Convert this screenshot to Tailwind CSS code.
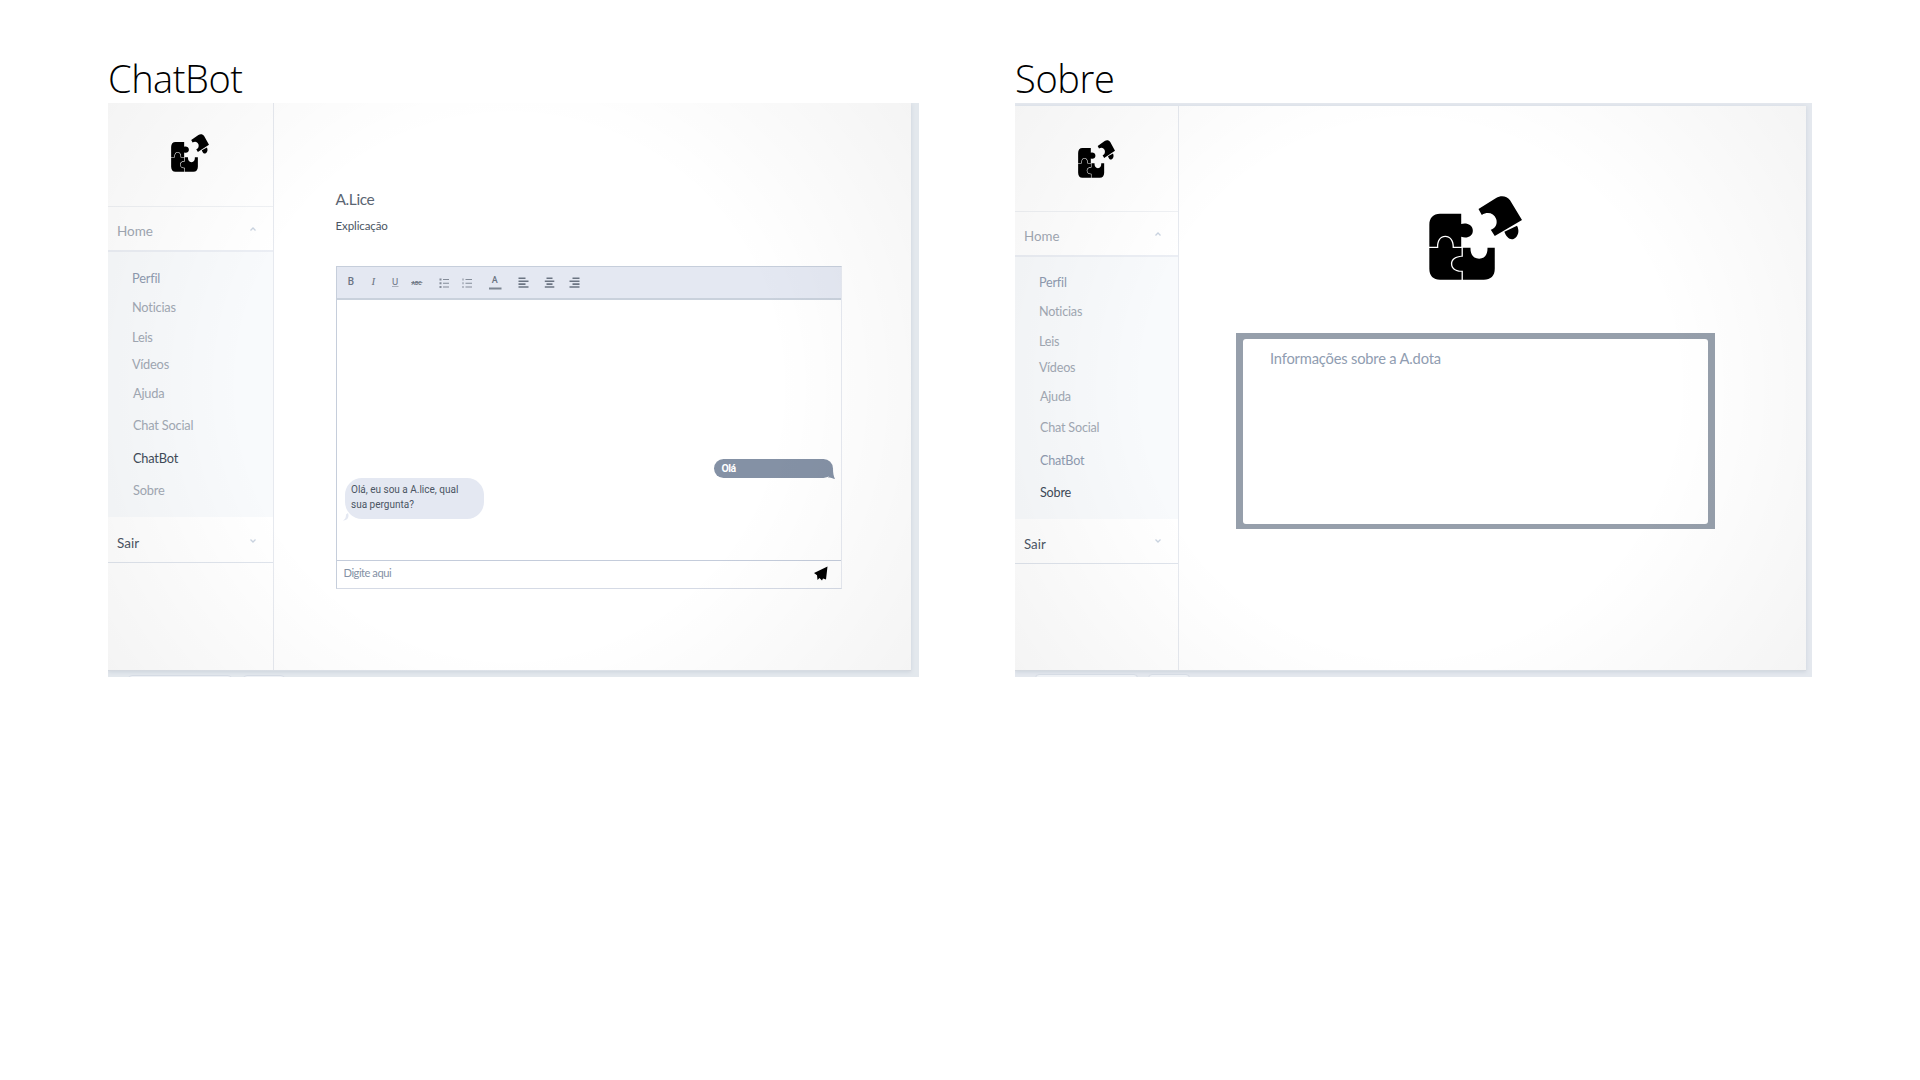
<!DOCTYPE html>
<html lang="pt">
<head>
<meta charset="utf-8">
<title>ChatBot / Sobre</title>
<script src="https://cdn.jsdelivr.net/npm/@tailwindcss/browser@4"></script>
</head>
<body class="bg-white w-[1920px] h-[1080px] overflow-hidden font-['Lato',sans-serif]">
<svg class="hidden">
  <symbol id="puzzle" viewBox="57 48 280 252" preserveAspectRatio="none">
    <path d="M57 150H255V250H57Z" fill="none"/>
    <path d="M90 101H154V132C168 127 189 133 189 152C189 170 170 176 154 170V200H132C132 179 121 167 106 167C91 167 81 180 81 200H58V134C58 114 70 101 90 101Z"/>
    <path d="M58 204H85C84 185 91 171 106 171C121 171 129 185 128 204H155V227C137 228 123 236 123 251C123 267 138 276 155 275V299H90C70 299 58 287 58 266Z"/>
    <path d="M159 203H182C181 222 190 236 208 236C226 236 234 221 233 203H255V266C255 287 243 299 222 299H159V272C141 273 127 266 127 251C127 237 142 230 159 230Z"/>
    <path d="M206 87L259 54C273 46 291 47 301 61L337 120L255 168L243 149C258 144 264 130 259 116C252 99 233 94 216 105Z"/>
    <path d="M284 155L322 137C330 151 326 169 313 176C301 182 289 170 284 155Z"/>
  </symbol>
</svg>
<main class="flex pl-[108px] pt-[54px] gap-[96px]">
  <!-- ChatBot -->
  <section class="w-[811px]">
    <h1 class="h-[49px] font-['Open_Sans'] font-light text-[38px] leading-[49px] tracking-[-0.45px] text-black">ChatBot</h1>
    <div class="relative h-[574px] bg-[#e3e8ed] pr-2 overflow-hidden">
      <div class="relative flex h-[568px] w-[803px] bg-white border-b border-[#dde2e9] shadow-[0_1px_4px_#ccd3dc]">
        <aside class="w-[166px] border-r border-[#e6e9ef]">
          <div class="h-[103px] pl-[63px] pt-[31px]"><svg class="w-[38px] h-[38px]"><use href="#puzzle"/></svg></div>
          <div class="h-[46px] border-t border-[#eff1f4] border-b-2 border-b-[#ebeef4] flex justify-between pl-[9px] pr-[16px] pt-[16px]">
            <span class="text-[13.5px] leading-4 text-[#a1a8b3]">Home</span>
            <svg class="w-2 h-2 mt-[2px]" viewBox="0 0 8 8" fill="none" stroke="#c9d3e0" stroke-width="1.3"><path d="M1.5 5.5L4 3L6.500 5.500"/></svg>
          </div>
          <nav class="h-[265px] bg-[#f8fafc] pl-6 text-[12.800px] tracking-[-0.2px] leading-4 text-[#a1a8b3]">
            <div class="h-[34px] flex items-end text-[#8f9bb0]">Perfil</div>
            <div class="h-[29px] flex items-end">Noticias</div>
            <div class="h-[30px] flex items-end">Leis</div>
            <div class="h-[27px] flex items-end">Vídeos</div>
            <div class="h-[29px] flex items-end pl-px">Ajuda</div>
            <div class="h-[32px] flex items-end pl-px">Chat Social</div>
            <div class="h-[33px] flex items-end pl-px text-[#404a58]">ChatBot</div>
            <div class="h-[32px] flex items-end pl-px">Sobre</div>
          </nav>
          <div class="h-[46px] border-b border-[#dfe4ec] flex justify-between pl-[9px] pr-[16px] pt-[18px]">
            <span class="text-[13.5px] leading-4 text-[#4c5664]">Sair</span>
            <svg class="w-2 h-2 mt-[2px]" viewBox="0 0 8 8" fill="none" stroke="#c9d3e0" stroke-width="1.3"><path d="M1.5 2.5L4 5L6.500 2.500"/></svg>
          </div>
        </aside>
        <div class="pl-[61.500px] pt-[86px]">
          <h2 class="text-[15.500px] tracking-[-0.4px] leading-5 text-[#5b6572]">A.Lice</h2>
          <p class="mt-[7px] text-[11.500px] tracking-[-0.1px] leading-5 text-[#4b5563] h-5">Explicação</p>
          <div class="mt-[30px] w-[506px] h-[323px] border border-[#c6cedb] border-r-[#e6e9f0] border-b-[#d5dae5] flex flex-col">
            <div class="h-[33px] bg-[#e4e8f2] border-b-2 border-[#c9d1dc]">
              <svg class="w-[260px] h-[31px]" viewBox="337 267 260 31" fill="#6b7482" stroke="none">
                <text x="347.800" y="285" font-family="Roboto" font-weight="500" font-size="10">B</text>
                <text x="371.500" y="285" font-family="Liberation Serif" font-style="italic" font-size="11">I</text>
                <text x="392" y="284.500" font-family="Roboto" font-size="9.500">U</text>
                <path d="M392 286H398.500V287H392Z" opacity=".5"/>
                <text x="411.500" y="284.500" font-family="Roboto" font-weight="700" font-size="5.200">ABC</text>
                <path d="M411 282.300H422.500V283H411Z"/>
                <path d="M439.500 278.500h2v2h-2zm0 3.700h2v2h-2zm0 3.700h2v2h-2zM443 279h6v1h-6zm0 3.700h6v1h-6zm0 3.700h6v1h-6z" opacity=".8"/>
                <path d="M462.500 278.500h1v2h-1zm0 3.700h1v2h-1zm0 3.700h1v2h-1zM465.500 279h6.500v1h-6.500zm0 3.700h6.500v1h-6.500zm0 3.700h6.500v1h-6.500z" opacity=".8"/>
                <text x="491.700" y="283" font-family="Roboto" font-weight="500" font-size="9">A</text>
                <path d="M489 287.500h12.500v2H489z" opacity=".85"/>
                <path d="M518.500 277.500h7v1.600h-7zm0 2.900h10v1.600h-10zm0 2.900h7v1.600h-7zm0 2.900h10v1.600h-10z"/>
                <path d="M546.500 277.500h6v1.600h-6zm-1.700 2.900h9.500v1.600h-9.500zm1.700 2.900h6v1.600h-6zm-1.700 2.900h9.500v1.600h-9.500z"/>
                <path d="M572.500 277.500h7v1.600h-7zm-3 2.900h10v1.600h-10zm3 2.900h7v1.600h-7zm-3 2.900h10v1.600h-10z"/>
              </svg>
            </div>
            <div class="flex-1 flex flex-col">
              <div class="relative self-end mr-2 mt-[159px] w-[119px] h-[19px] rounded-[10px] bg-[#8491a5] pl-[8px] text-white font-['Roboto'] font-bold text-[10.500px] leading-[20px] tracking-[-0.5px]">Olá
                <svg class="absolute right-[-2px] bottom-[-1px] w-[7px] h-[11px]" viewBox="0 0 7 11"><path d="M5 0C5 5 5.500 8 7 11C5 10.500 3 9 0 9.500Z" fill="#8491a5"/></svg>
              </div>
              <div class="relative ml-[8px] w-[139px] h-[41px] rounded-[17px] bg-[#e4e8f2] pl-[6.500px] pt-[4px] font-['Roboto'] text-[10px] leading-[15px] text-[#4b5563]">Olá, eu sou a A.lice, qual<br>sua pergunta?
                <svg class="absolute left-[-2px] bottom-[-2px] w-[6px] h-[8px]" viewBox="0 0 6 8"><path d="M5 0C6.500 4 4.500 8 0 7.500C2.500 6 3 4 3 1.500Z" fill="#e4e8f2"/></svg>
              </div>
            </div>
            <div class="h-[28px] border-t border-[#c4ccdb] flex items-start justify-between pl-[7px] pr-[13px]">
              <span class="text-[11.200px] tracking-[-0.5px] leading-[24px] text-[#8491a5]">Digite aqui</span>
              <svg class="mt-[5px] w-[14px] h-[15px]" viewBox="0 0 14 15"><path d="M13.500 .5L0 7L3 9.200L3.500 14L5.500 12L8 14.500L9 12.500L12 13.500Z"/></svg>
            </div>
          </div>
        </div>
      </div>
      <div class="absolute left-[20px] bottom-[-6px] w-[104px] h-2 rounded border border-[#d5dbe4] bg-[#eef1f5]"></div>
      <div class="absolute left-[135px] bottom-[-6px] w-[42px] h-2 rounded border border-[#d5dbe4] bg-[#eef1f5]"></div>
      <div class="absolute left-0 top-0 w-[803px] h-[568px] bg-[radial-gradient(circle,transparent_54%,rgba(0,0,0,0.043)_100%)]"></div>
    </div>
  </section>
  <!-- Sobre -->
  <section class="w-[797px]">
    <h1 class="h-[49px] font-['Open_Sans'] font-light text-[38px] leading-[49px] tracking-[-0.35px] text-black">Sobre</h1>
    <div class="relative h-[574px] bg-[#e4e8ee] pt-[3px] overflow-hidden">
      <div class="relative flex h-[565px] w-[791px] bg-white border-b border-[#dde2e9] shadow-[0_1px_4px_#ccd3dc]">
        <aside class="w-[164px] border-r border-[#e6e9ef]">
          <div class="h-[105px] pl-[63px] pt-[34px]"><svg class="w-[37px] h-[38px]"><use href="#puzzle"/></svg></div>
          <div class="h-[46px] border-t border-[#eff1f4] border-b-2 border-b-[#ebeef4] flex justify-between pl-[9px] pr-[16px] pt-[16px]">
            <span class="text-[13.300px] leading-4 text-[#a1a8b3]">Home</span>
            <svg class="w-2 h-2 mt-[2px]" viewBox="0 0 8 8" fill="none" stroke="#c9d3e0" stroke-width="1.3"><path d="M1.5 5.5L4 3L6.500 5.500"/></svg>
          </div>
          <nav class="h-[262px] bg-[#f8fafc] pl-6 text-[12.600px] tracking-[-0.2px] leading-4 text-[#a1a8b3]">
            <div class="h-[34px] flex items-end text-[#8f9bb0]">Perfil</div>
            <div class="h-[29px] flex items-end">Noticias</div>
            <div class="h-[30px] flex items-end">Leis</div>
            <div class="h-[26px] flex items-end">Vídeos</div>
            <div class="h-[29px] flex items-end pl-px">Ajuda</div>
            <div class="h-[31px] flex items-end pl-px">Chat Social</div>
            <div class="h-[33px] flex items-end pl-px text-[#8f9bb0]">ChatBot</div>
            <div class="h-[32px] flex items-end pl-px text-[#404a58]">Sobre</div>
          </nav>
          <div class="h-[45px] border-b border-[#dfe4ec] flex justify-between pl-[9px] pr-[16px] pt-[17px]">
            <span class="text-[13.300px] leading-4 text-[#4c5664]">Sair</span>
            <svg class="w-2 h-2 mt-px" viewBox="0 0 8 8" fill="none" stroke="#c9d3e0" stroke-width="1.3"><path d="M1.5 2.5L4 5L6.500 2.500"/></svg>
          </div>
        </aside>
        <div class="flex flex-col pl-[57px] pt-[90px]">
          <svg class="ml-[193px] w-[93px] h-[84px]"><use href="#puzzle"/></svg>
          <div class="mt-[53px] w-[479px] h-[196px] bg-[#969fab] px-[7px] py-[5.500px]">
            <div class="h-full bg-white rounded-[3px] pl-[27px] pt-[9px] text-[14.700px] tracking-[-0.18px] leading-[20px] text-[#909db1]">Informações sobre a A.dota</div>
          </div>
        </div>
      </div>
      <div class="absolute left-[20px] bottom-[-5px] w-[103px] h-2 rounded border border-[#d5dbe4] bg-[#eef1f5]"></div>
      <div class="absolute left-[133px] bottom-[-5px] w-[42px] h-2 rounded border border-[#d5dbe4] bg-[#eef1f5]"></div>
      <div class="absolute left-0 top-[3px] w-[791px] h-[565px] bg-[radial-gradient(circle,transparent_54%,rgba(0,0,0,0.043)_100%)]"></div>
    </div>
  </section>
</main>
</body>
</html>
